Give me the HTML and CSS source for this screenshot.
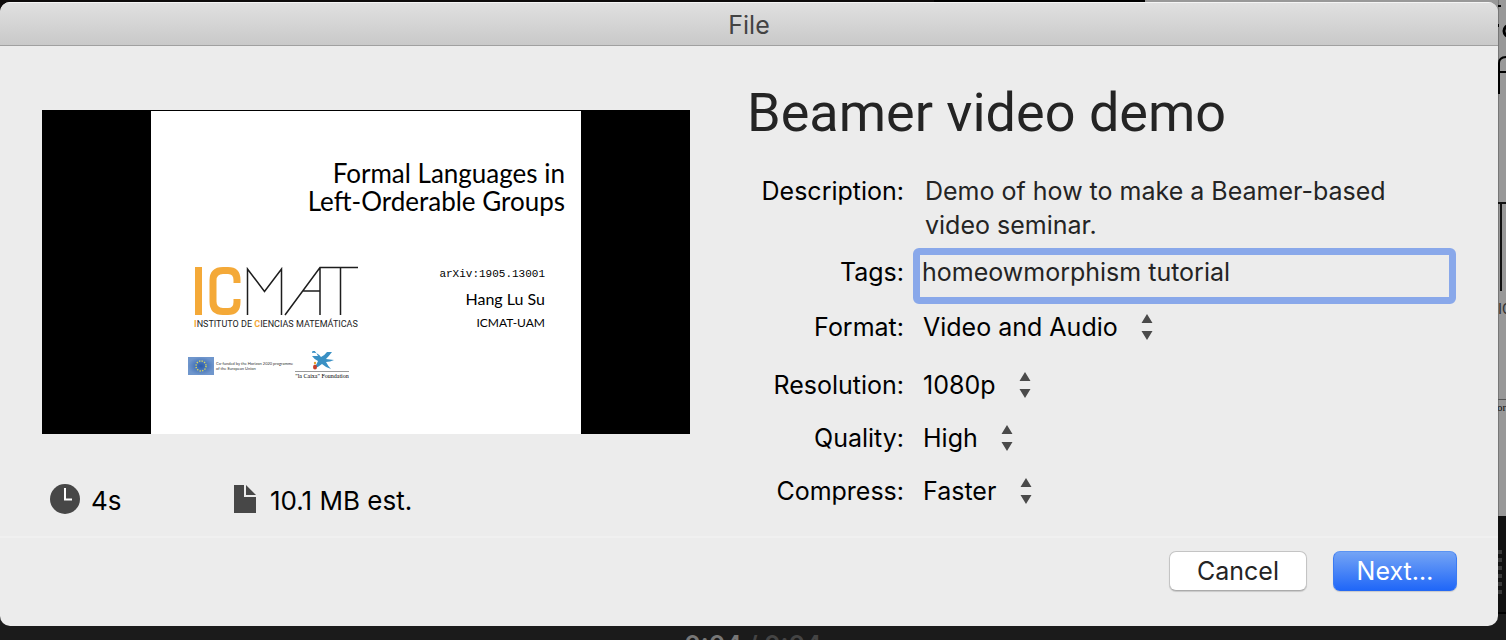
FILE: index.html
```html
<!DOCTYPE html>
<html lang="en">
<head>
<meta charset="utf-8">
<title>File</title>
<link rel="stylesheet" href="styles.css">
</head>
<body>
<div class="backdrop" aria-hidden="true">
  <svg class="backdrop-edge" width="8" height="640" viewBox="0 0 8 640">
    <rect width="8" height="516" fill="#989898"/>
    <rect width="1" height="516" fill="#777"/>
    <path d="M0 6h3M0 24v3" stroke="#000" stroke-width="2"/>
    <circle cx="12" cy="31" r="6" fill="none" stroke="#000" stroke-width="3"/>
    <path d="M1 94V63q0-6 8-6M0 72h8" fill="none" stroke="#000" stroke-width="2"/>
    <path d="M0 203h8M3 203v88" stroke="#111" stroke-width="2"/>
    <text class="edge-sans" x="0" y="314">IC</text>
    <path d="M0 399.500h8" stroke="#555"/>
    <text class="edge-serif" x="-1" y="411">or</text>
    <rect y="516" width="8" height="96" fill="#111"/>
    <path d="M2 550v44" stroke="#3a3a3a" stroke-width="4" stroke-dasharray="4 4"/>
    <rect y="612" width="8" height="2" fill="#000"/>
    <rect y="614" width="8" height="26" fill="#1b1b1b"/>
  </svg>
  <p class="playback"><span class="playback-now">0:04</span> / 0:04</p>
</div>

<main class="dialog">
  <header class="titlebar">File</header>
  <div class="content">
    <section class="preview">
      <div class="thumb">
        <div class="slide">
          <p class="slide-title">Formal Languages in<br>Left-Orderable Groups</p>
          <div class="slide-body">
            <div class="logos">
              <div class="icmat">
                <svg width="164" height="50" viewBox="0 0 164 50" role="img" aria-label="ICMAT">
                  <rect x="1" y="1" width="7" height="48" fill="#f4a938"/>
                  <path d="M43 17v-3q0-9.500-9-9.500h-5q-10 0-10 10v21q0 10 10 10h5q9 0 9-9.500v-3" fill="none" stroke="#f4a938" stroke-width="7"/>
                  <path d="M53.500 49V3L70.500 25.500 87.500 3V49M91 49L126 1.500H164M126 2V49M109 25H126M146.500 2V49" fill="none" stroke="#1d1d1d" stroke-width="1.500"/>
                </svg>
                <p class="icmat-name"><b>I</b>NSTITUTO DE <b>C</b>IENCIAS MATEMÁTICAS</p>
              </div>
              <div class="sponsors">
                <svg width="26" height="18" viewBox="0 0 26 18" role="img" aria-label="European Union">
                  <defs><radialGradient id="eu"><stop offset="0" stop-color="#2b5dac"/><stop offset="1" stop-color="#6f96cc"/></radialGradient></defs>
                  <rect width="26" height="18" fill="url(#eu)"/>
                  <circle cx="13" cy="9" r="5" fill="none" stroke="#d8d75a" stroke-width="1.400" stroke-dasharray="1.300 1.318"/>
                </svg>
                <p class="eu-note">Co-funded by the Horizon 2020 programme<br>of the European Union</p>
                <div class="caixa">
                  <svg width="24" height="20" viewBox="0 0 24 20" aria-hidden="true">
                    <path d="M2 2q5-1 9 4Q14 5 17 1l5 0q-3 4-6 7l8 1q-4 2-8 2 2 4 5 7-6-2-9-5-3 3-8 4 3-4 4-7-4-2-6-5 3 0 6 0-2-4-5-7z" fill="#3990c4"/>
                    <ellipse cx="5" cy="16" rx="2" ry="2.500" fill="#c8402c"/>
                    <circle cx="5" cy="12" r="1.200" fill="#e9a431"/>
                  </svg>
                  <p class="caixa-name">"la Caixa" Foundation</p>
                </div>
              </div>
            </div>
            <div class="credits">
              <p class="arxiv">arXiv:1905.13001</p>
              <p class="author">Hang Lu Su</p>
              <p class="affiliation">ICMAT-UAM</p>
            </div>
          </div>
        </div>
      </div>
      <div class="stats">
        <p class="stat stat-time">
          <svg width="30" height="30" viewBox="0 0 30 30" aria-hidden="true"><circle cx="15" cy="15" r="15" fill="#474747"/><path d="M15 4v11.500h7" fill="none" stroke="#fff" stroke-width="2"/></svg>
          4s
        </p>
        <p class="stat stat-size">
          <svg width="23" height="28" viewBox="0 0 23 28" aria-hidden="true"><path d="M0 0h10v12h12v16H0zM12 0l10 10H12z" fill="#474747"/></svg>
          10.1 MB est.
        </p>
      </div>
    </section>

    <form class="details" id="export">
      <h1>Beamer video demo</h1>
      <div class="field">
        <label for="description">Description:</label>
        <textarea id="description" rows="2">Demo of how to make a Beamer-based video seminar.</textarea>
      </div>
      <div class="field">
        <label for="tags">Tags:</label>
        <input id="tags" type="text" value="homeowmorphism tutorial">
      </div>
      <div class="field">
        <label for="format">Format:</label>
        <span class="picker"><select id="format"><option>Video and Audio</option></select><svg class="arrows" width="12" height="26" viewBox="0 0 12 26" aria-hidden="true"><path d="M6 0l5.500 9H.5zM6 26L.5 17h11z"/></svg></span>
      </div>
      <div class="field field-apart">
        <label for="resolution">Resolution:</label>
        <span class="picker"><select id="resolution"><option>1080p</option></select><svg class="arrows" width="12" height="26" viewBox="0 0 12 26" aria-hidden="true"><path d="M6 0l5.500 9H.5zM6 26L.5 17h11z"/></svg></span>
      </div>
      <div class="field field-spaced">
        <label for="quality">Quality:</label>
        <span class="picker"><select id="quality"><option>High</option></select><svg class="arrows" width="12" height="26" viewBox="0 0 12 26" aria-hidden="true"><path d="M6 0l5.500 9H.5zM6 26L.5 17h11z"/></svg></span>
      </div>
      <div class="field field-spaced">
        <label for="compress">Compress:</label>
        <span class="picker"><select id="compress"><option>Faster</option></select><svg class="arrows" width="12" height="26" viewBox="0 0 12 26" aria-hidden="true"><path d="M6 0l5.500 9H.5zM6 26L.5 17h11z"/></svg></span>
      </div>
    </form>
  </div>
  <footer class="actions">
    <button class="button" type="button">Cancel</button>
    <button class="button button-primary" type="submit" form="export">Next…</button>
  </footer>
</main>
</body>
</html>
```
FILE: styles.css
```css
* { box-sizing: border-box; }
body, p, h1 { margin: 0; }
body {
  position: relative;
  min-height: 100vh;
  padding: 2px 8px 14px 0;
  display: flex;
  overflow: hidden;
  background: #1b1b1b;
  color: #000;
  font: 25px/34px Inter, "Liberation Sans", sans-serif;
}
svg { display: block; flex: none; }

.backdrop {
  position: absolute;
  inset: 0;
  overflow: hidden;
  background: linear-gradient(90deg, #0d0b0b 62%, #000 62%, #000 76%, #989898 76%) top / 100% 20px no-repeat;
}
.backdrop-edge { position: absolute; top: 0; right: 0; }
.edge-sans { font: 15px Roboto, sans-serif; fill: #333; }
.edge-serif { font: 11px "Liberation Serif", serif; fill: #111; }
.playback {
  position: absolute;
  top: 628px;
  left: 0;
  width: 100%;
  font-weight: 600;
  text-align: center;
  color: #444;
}
.playback-now { color: #777; }

.dialog {
  position: relative;
  flex: 1;
  display: flex;
  flex-direction: column;
  overflow: hidden;
  border-radius: 10px;
  background: #ececec;
}
.titlebar {
  height: 44px;
  padding-top: 5px;
  border-top: 1px solid #f4f4f4;
  border-bottom: 1px solid #a0a0a0;
  background: linear-gradient(#e0e0e0, #c9c9c9);
  color: #434343;
  text-align: center;
}
.content {
  flex: 1;
  display: grid;
  grid-template-columns: minmax(0, 648fr) minmax(0, 709fr);
  column-gap: 57px;
  padding: 34px 42px 16px;
}

.preview { padding-top: 30px; }
.thumb {
  display: flex;
  justify-content: center;
  aspect-ratio: 2 / 1;
  padding-top: 1px;
  background: #000;
}
.slide {
  width: 430px;
  padding-top: 48px;
  background: #fff;
  font-family: Lato, sans-serif;
}
.slide-title {
  padding-right: 16px;
  font-size: 26px;
  line-height: 28px;
  text-align: right;
}
.slide-body {
  display: flex;
  justify-content: space-between;
  padding: 51px 36px 0 37px;
}
.icmat { padding-left: 6px; }
.icmat-name {
  font: 9px/16px Roboto, sans-serif;
  color: #222;
  white-space: nowrap;
}
.icmat-name b { color: #f4a938; }
.sponsors { display: flex; align-items: center; gap: 2px; margin-top: 19px; }
.eu-note { font: 4px/5px Lato, sans-serif; color: #333; white-space: nowrap; }
.caixa { display: flex; flex-direction: column; align-items: center; }
.caixa-name {
  border-top: 1px solid #999;
  font: 6px/8px "Liberation Serif", serif;
  white-space: nowrap;
}
.credits { text-align: right; }
.arxiv { font: 11px/16px "Liberation Mono", monospace; }
.author { margin-top: 5px; font-size: 16px; line-height: 24px; }
.affiliation { font-size: 12px; line-height: 24px; }

.stats { display: flex; padding: 50px 0 0 8px; font-size: 26px; }
.stat { display: flex; align-items: center; gap: 11px; }
.stat svg { margin-bottom: 4px; }
.stat-time { width: 184px; }
.stat-size { gap: 13px; }

.details { min-width: 0; }
h1 {
  margin-bottom: 28px;
  color: #242424;
  font: 400 54px/66px Roboto, sans-serif;
}
.field {
  display: grid;
  grid-template-columns: 157px minmax(0, 1fr);
  column-gap: 9px;
  margin-bottom: 6px;
}
.field label { text-align: right; }
.field-apart { margin-top: 24px; }
.field-spaced { margin-top: 19px; }
textarea, input, select {
  margin: 0;
  border: 0;
  background: transparent;
  color: #242424;
  font: inherit;
  appearance: none;
  outline: 0;
}
textarea {
  display: block;
  width: 500px;
  max-width: 100%;
  padding: 0 0 0 12px;
  resize: none;
  overflow: hidden;
}
input {
  width: 100%;
  height: 56px;
  padding: 0 2px 8px;
  border: 7px solid #89a8ea;
  border-radius: 6px;
}
.field label[for="tags"] { padding-top: 7px; }
.picker { display: flex; align-items: center; gap: 23px; padding-left: 10px; }
select { height: 34px; padding: 0; color: #000; }
.arrows { fill: #4a4a4a; pointer-events: none; }

.actions {
  display: flex;
  justify-content: flex-end;
  gap: 26px;
  padding: 13px 41px 35px;
  border-top: 2px solid #f0f0f0;
}
.button {
  min-width: 138px;
  height: 40px;
  padding: 0 22px;
  border: 1px solid #c4c4c4;
  border-bottom-color: #ababab;
  border-radius: 7px;
  background: #fff;
  box-shadow: 0 1px 1px rgba(0, 0, 0, .15);
  color: #242424;
  font: inherit;
}
.button-primary {
  min-width: 124px;
  border-color: #5a93f3 #3b7bf3 #2468f2;
  background: linear-gradient(#74a4f5, #2067f8);
  color: #fff;
}
```
